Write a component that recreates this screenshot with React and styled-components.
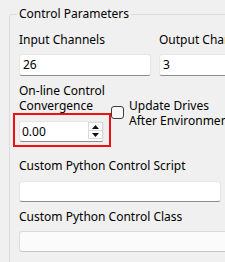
import React from 'react';
import styled, { createGlobalStyle } from 'styled-components';

const Global = createGlobalStyle`
  html, body { margin: 0; padding: 0; background: #f0f0f0; overflow: hidden; }
  body {
    font-family: "Segoe UI", "Noto Sans", sans-serif;
    font-size: 12px;
    color: #000;
  }
  * { box-sizing: border-box; }
`;

const Page = styled.div`
  width: 225px;
  height: 262px;
  overflow: hidden;
  padding: 6px 0 0 9px;
`;

const Group = styled.fieldset`
  margin: 0;
  width: 260px;
  min-height: 300px;
  border: 1px solid #dcdcdc;
  border-radius: 2px;
  padding: 10px 0 0 9px;
  display: flex;
  flex-direction: column;
`;

const Legend = styled.legend`
  padding: 0 2px;
  margin-left: -2px;
  line-height: 16px;
`;

const Label = styled.div`
  line-height: ${p => p.$lh || 16}px;
  white-space: nowrap;
`;

const TwoCols = styled.div`
  display: grid;
  grid-template-columns: 132px 132px;
  column-gap: 8px;
`;

const Field = styled.div`
  display: flex;
  flex-direction: column;
  gap: ${p => p.$gap ?? 6}px;
  margin-top: ${p => p.$mt || 0}px;
  width: ${p => p.$w || 'auto'};
`;

const Input = styled.div`
  height: ${p => p.$h || 22}px;
  background: ${p => (p.$muted ? '#fbfbfb' : '#ffffff')};
  border: 1px solid ${p => (p.$muted ? '#dadada' : '#e6e6e6')};
  border-bottom-color: ${p => (p.$muted ? '#c6c6c6' : '#8c8c8c')};
  border-radius: 3px;
  padding: 0 3px;
  display: flex;
  align-items: center;
  line-height: 16px;
`;

const ConvRow = styled.div`
  display: flex;
  align-items: center;
  margin-top: 7px;
`;

const ConvCol = styled.div`
  width: 85px;
  display: flex;
  flex-direction: column;
`;

const SpinWrap = styled.div`
  position: relative;
  margin-top: 8px;
`;

const Spin = styled.div`
  height: 21px;
  background: #fff;
  border: 1px solid #e6e6e6;
  border-bottom-color: #8c8c8c;
  border-radius: 3px;
  display: flex;
  align-items: flex-start;
  padding-left: 2px;
`;

const SpinText = styled.div`
  flex: 1;
  line-height: 19px;
`;

const SpinButtons = styled.div`
  width: 15px;
  height: 17px;
  display: flex;
  flex-direction: column;
`;

const SpinBtn = styled.div`
  flex: 1;
  display: flex;
  align-items: center;
  justify-content: center;
  background: #fdfdfd;
  border: 1px solid #dadada;
  border-top-width: ${p => (p.$down ? 0 : 1)}px;
`;

const Highlight = styled.div`
  position: absolute;
  left: -6px;
  top: -8px;
  right: -7px;
  bottom: -5px;
  border: 2px solid #ee1111;
  pointer-events: none;
`;

const Check = styled.div`
  display: flex;
  align-items: center;
  gap: 5px;
  margin-left: 7px;
`;

const Box = styled.div`
  width: 13px;
  height: 13px;
  border: 1px solid #3c3c3c;
  border-radius: 3px;
  background: #f7f7f7;
  flex: none;
`;

const Arrow = ({ up }) => (
  <svg width="7" height="4" viewBox="0 0 7 4">
    <polygon points={up ? '0,4 7,4 3.5,0' : '0,0 7,0 3.5,4'} fill="#111" />
  </svg>
);

export default function App() {
  return (
    <>
      <Global />
      <Page>
        <Group>
          <Legend>Control Parameters</Legend>
          <TwoCols>
            <Field>
              <Label>Input Channels</Label>
              <Input>26</Input>
            </Field>
            <Field>
              <Label>Output Channels</Label>
              <Input>3</Input>
            </Field>
          </TwoCols>
          <ConvRow>
            <ConvCol>
              <Label $lh={15}>On-line Control<br />Convergence</Label>
              <SpinWrap>
                <Spin>
                  <SpinText>0.00</SpinText>
                  <SpinButtons>
                    <SpinBtn><Arrow up /></SpinBtn>
                    <SpinBtn $down><Arrow /></SpinBtn>
                  </SpinButtons>
                </Spin>
                <Highlight />
              </SpinWrap>
            </ConvCol>
            <Check>
              <Box />
              <Label $lh={15}>Update Drives<br />After Environment</Label>
            </Check>
          </ConvRow>
          <Field $mt={16} $gap={7} $w="202px">
            <Label>Custom Python Control Script</Label>
            <Input $h={21} />
          </Field>
          <Field $mt={7} $gap={6} $w="240px">
            <Label>Custom Python Control Class</Label>
            <Input $h={21} $muted />
          </Field>
        </Group>
      </Page>
    </>
  );
}
